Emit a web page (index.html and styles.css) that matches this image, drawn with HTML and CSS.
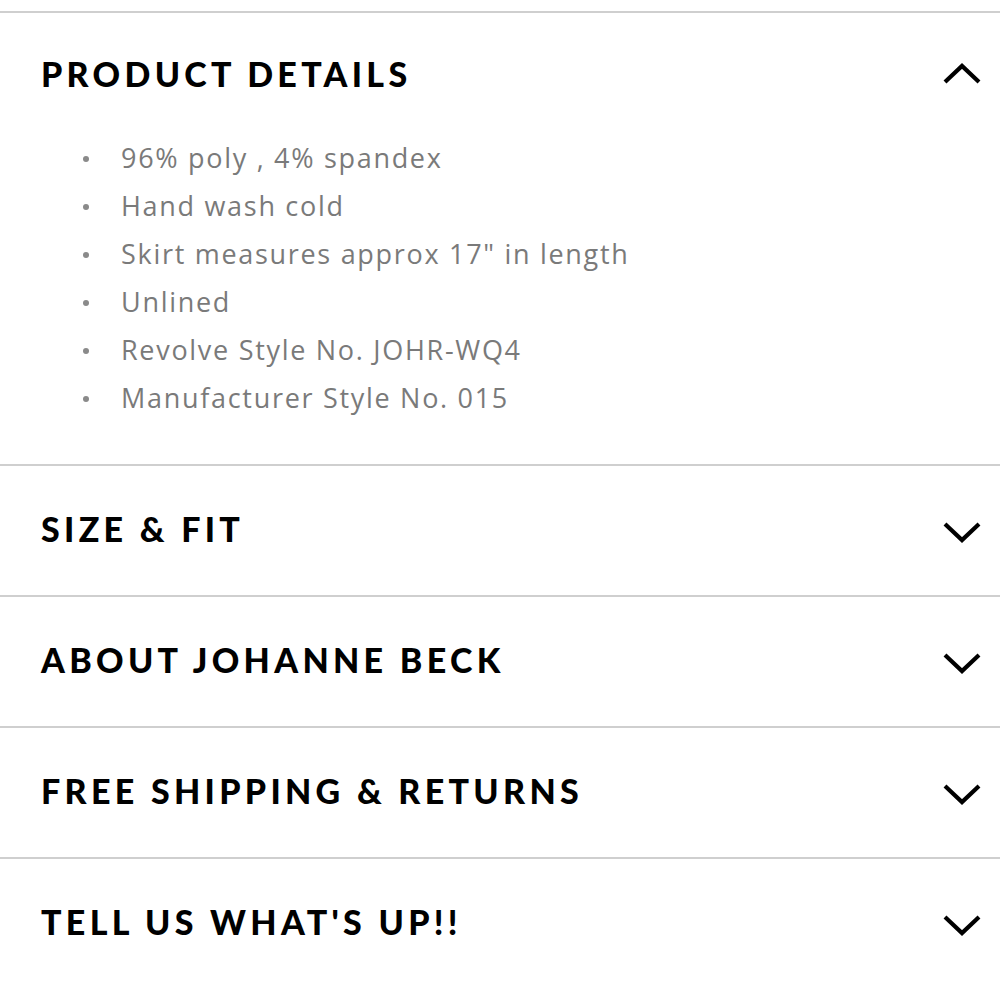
FILE: index.html
```html
<!DOCTYPE html>
<html>
<head>
<meta charset="utf-8">
<link rel="stylesheet" href="styles.css">
</head>
<body>
<div class="accordion">
  <section class="panel open">
    <div class="panel-head first">
      <h2 class="title">PRODUCT DETAILS</h2>
      <svg class="chev" viewBox="0 0 40 24" width="40" height="24"><polyline points="3,20 20,4 37,20" fill="none" stroke="#000" stroke-width="4.2"/></svg>
    </div>
    <ul class="details">
      <li>96% poly , 4% spandex</li>
      <li>Hand wash cold</li>
      <li>Skirt measures approx 17" in length</li>
      <li>Unlined</li>
      <li>Revolve Style No. JOHR-WQ4</li>
      <li>Manufacturer Style No. 015</li>
    </ul>
  </section>
  <section class="panel">
    <div class="panel-head">
      <h2 class="title">SIZE &amp; FIT</h2>
      <svg class="chev" viewBox="0 0 40 24" width="40" height="24"><polyline points="3,4 20,20 37,4" fill="none" stroke="#000" stroke-width="4.2"/></svg>
    </div>
  </section>
  <section class="panel">
    <div class="panel-head">
      <h2 class="title">ABOUT JOHANNE BECK</h2>
      <svg class="chev" viewBox="0 0 40 24" width="40" height="24"><polyline points="3,4 20,20 37,4" fill="none" stroke="#000" stroke-width="4.2"/></svg>
    </div>
  </section>
  <section class="panel">
    <div class="panel-head">
      <h2 class="title">FREE SHIPPING &amp; RETURNS</h2>
      <svg class="chev" viewBox="0 0 40 24" width="40" height="24"><polyline points="3,4 20,20 37,4" fill="none" stroke="#000" stroke-width="4.2"/></svg>
    </div>
  </section>
  <section class="panel last">
    <div class="panel-head">
      <h2 class="title">TELL US WHAT'S UP!!</h2>
      <svg class="chev" viewBox="0 0 40 24" width="40" height="24"><polyline points="3,4 20,20 37,4" fill="none" stroke="#000" stroke-width="4.2"/></svg>
    </div>
  </section>
</div>
</body>
</html>
```

FILE: styles.css
```css
html, body {
  margin: 0;
  padding: 0;
  background: #fff;
}
body {
  padding-top: 11px;
}
.accordion {
  border-top: 2px solid #cfcfcf;
}
.panel {
  border-bottom: 2px solid #cfcfcf;
}
.panel.last {
  border-bottom: none;
}
.panel-head {
  height: 129px;
  box-sizing: border-box;
  display: flex;
  align-items: center;
  justify-content: space-between;
  padding: 0 18px 4px 41px;
}
.panel-head.first {
  height: 121px;
  padding-bottom: 0;
}
.title {
  margin: 0;
  font-family: "Lato", "Liberation Sans", sans-serif;
  font-weight: 900;
  font-size: 34px;
  letter-spacing: 4.3px;
  color: #000;
}
.chev {
  display: block;
  margin-top: 6px;
}
.panel-head.first .chev {
  margin-top: 0;
}
.details {
  margin: 0;
  padding: 0 0 42px 121px;
  list-style: none;
}
.details li {
  position: relative;
  font-family: "Open Sans", "Liberation Sans", sans-serif;
  font-size: 27px;
  letter-spacing: 1.7px;
  line-height: 48px;
  color: #7a7a7a;
}
.details li::before {
  content: "";
  position: absolute;
  left: -38px;
  top: 22px;
  width: 6px;
  height: 6px;
  border-radius: 50%;
  background: #8a8a8a;
}
```
